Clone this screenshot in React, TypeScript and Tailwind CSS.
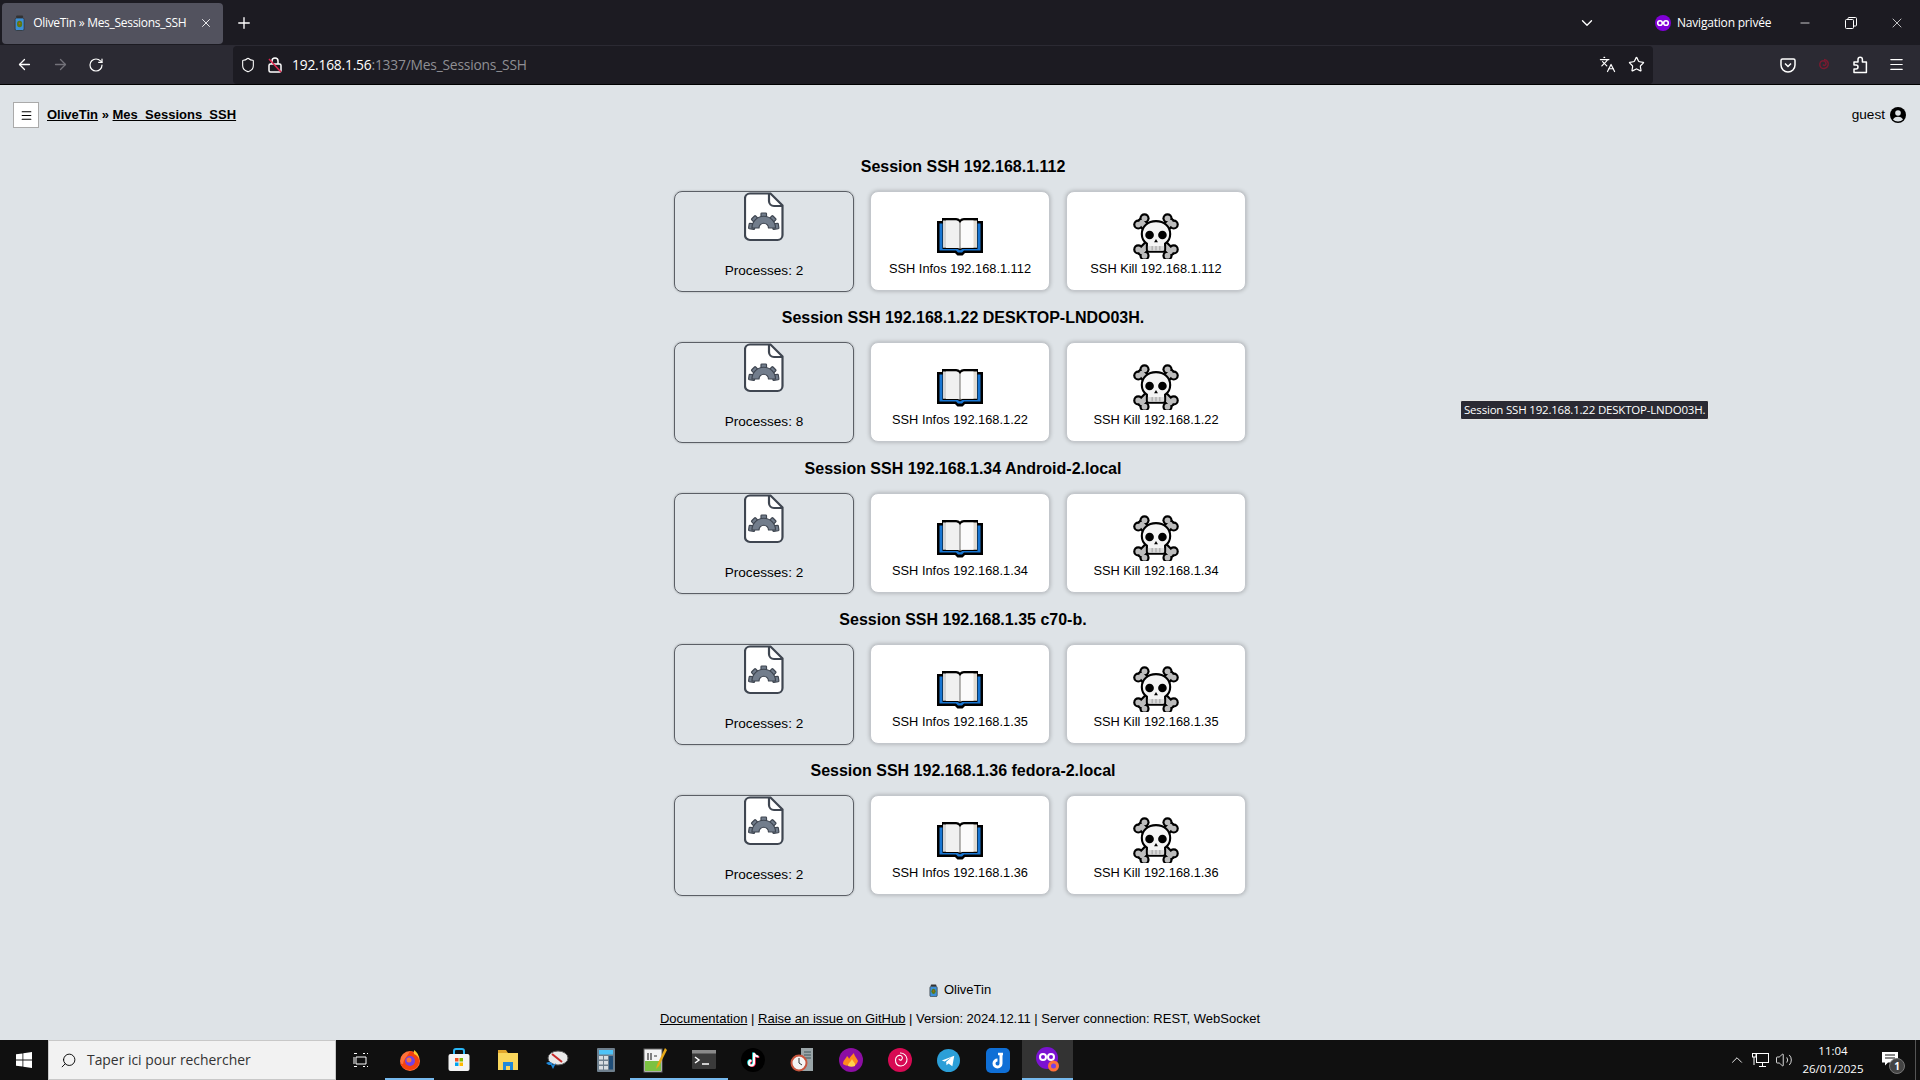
import { ArrowLeft, ArrowRight, ChevronDown, ChevronUp, Menu, Minus, Plus, RotateCw, Search, Shield, Star, X, Languages, Volume2 } from 'lucide-react';

const sessions = [
  { title: 'Session SSH 192.168.1.112', ip: '192.168.1.112', processes: 2 },
  { title: 'Session SSH 192.168.1.22 DESKTOP-LNDO03H.', ip: '192.168.1.22', processes: 8 },
  { title: 'Session SSH 192.168.1.34 Android-2.local', ip: '192.168.1.34', processes: 2 },
  { title: 'Session SSH 192.168.1.35 c70-b.', ip: '192.168.1.35', processes: 2 },
  { title: 'Session SSH 192.168.1.36 fedora-2.local', ip: '192.168.1.36', processes: 2 },
];

function OliveJar({ size = 14 }: { size?: number }) {
  return (
    <svg width={size * 0.7} height={size} viewBox="0 0 10 16">
      <rect x="1.5" y="0.5" width="7" height="2.5" rx="1" fill="#333" />
      <rect x="0.5" y="3" width="9" height="12.5" rx="1.5" fill="#3d8fd6" stroke="#333" strokeWidth="0.8" />
      <ellipse cx="5" cy="9" rx="2.6" ry="3.2" fill="#5c7a12" />
      <circle cx="5" cy="8.5" r="0.9" fill="#c2572b" />
    </svg>
  );
}

function FileGear() {
  return (
    <svg width="40" height="50" viewBox="0 0 40 50" fill="none">
      <path d="M6 1.500h20.500L38.500 13.500V43a5 5 0 0 1-5 5H6a5 5 0 0 1-5-5V6.500a5 5 0 0 1 5-5z" fill="#fff" stroke="#3f4651" strokeWidth="2.200" />
      <path d="M25 1.500V9a5 5 0 0 0 5 5h8.500" stroke="#3f4651" strokeWidth="2.200" />
      {/* half gear: teeth, then ring */}
      <g fill="#727d8c" stroke="#3f4651" strokeWidth="1.200" strokeLinejoin="round">
        <rect x="17" y="21" width="5.500" height="6" rx="0.800" />
        <rect x="17" y="21" width="5.500" height="6" rx="0.800" transform="rotate(-45 19.750 36)" />
        <rect x="17" y="21" width="5.500" height="6" rx="0.800" transform="rotate(45 19.750 36)" />
        <rect x="17" y="21" width="5.500" height="6" rx="0.800" transform="rotate(-82 19.750 36)" />
        <rect x="17" y="21" width="5.500" height="6" rx="0.800" transform="rotate(82 19.750 36)" />
      </g>
      <path d="M8 36a11.750 11.750 0 0 1 23.500 0h-7a4.750 4.750 0 0 0-9.500 0z" fill="#727d8c" stroke="#3f4651" strokeWidth="1.200" strokeLinejoin="round" />
    </svg>
  );
}

function BookIcon() {
  return (
    <svg width="46" height="38" viewBox="0 0 46 38" className="mt-[4px]">
      <path d="M0 3h5V0h14c2 0 3.200.8 4 1.800.8-1 2-1.800 4-1.800h14v3h5v32H28l-2.500 2.500h-5L18 35H0z" fill="#000" />
      <path d="M2.500 5.500h3V31h14c1.200 0 2.500.5 3.500 1.500 1-1 2.300-1.500 3.500-1.500h14V5.500h3v27H27l-2 2h-4l-2-2H2.500z" fill="#1976d2" />
      <path d="M6 2.500h13c1.800 0 3 1 3.500 2.500v26c-.8-.8-1.800-1.200-3-1.200H6z" fill="#d4d4d4" />
      <path d="M40 2.500H27c-1.800 0-3 1-3.500 2.500v26c.8-.8 1.800-1.200 3-1.200H40z" fill="#e2dcd2" />
      <path d="M9 2.500h10c1.800 0 3 1 3.500 2.500v25H9z" fill="#f0f0f0" />
      <path d="M23.500 5c.5-1.500 1.700-2.500 3.500-2.500h9.500v27.300h-13z" fill="#fbfbfb" />
    </svg>
  );
}

function Bones({ color, line, knob }: { color: string; line: number; knob: number }) {
  return (
    <g stroke={color} fill={color} strokeWidth={line} strokeLinecap="round">
      <path d="M9 10l30 30M39 10L9 40" />
      <circle cx="5.500" cy="12" r={knob} stroke="none" />
      <circle cx="12" cy="5.500" r={knob} stroke="none" />
      <circle cx="42.500" cy="12" r={knob} stroke="none" />
      <circle cx="36" cy="5.500" r={knob} stroke="none" />
      <circle cx="5.500" cy="38" r={knob} stroke="none" />
      <circle cx="12" cy="44.500" r={knob} stroke="none" />
      <circle cx="42.500" cy="38" r={knob} stroke="none" />
      <circle cx="36" cy="44.500" r={knob} stroke="none" />
    </g>
  );
}

function SkullIcon() {
  return (
    <svg width="46" height="46" viewBox="0 0 48 48" className="mt-[1px]">
      <Bones color="#000" line={10} knob={5.300} />
      <Bones color="#bdbdbd" line={5.500} knob={3} />
      <path d="M24 8.500c8.500 0 14.800 5.500 14.800 13.500 0 4.500-2 8-5.300 10v6c0 1.500-1 2.500-2.500 2.500H17c-1.500 0-2.500-1-2.500-2.500v-6c-3.300-2-5.300-5.500-5.300-10 0-8 6.300-13.500 14.800-13.500z" fill="#f4f4f4" stroke="#000" strokeWidth="2.200" />
      <circle cx="17.300" cy="23" r="4.500" fill="#000" />
      <circle cx="30.700" cy="23" r="4.500" fill="#000" />
      <path d="M24 27l2 3.500h-4z" fill="#000" />
      <path d="M15.500 34.500h17V39H15.500z" fill="#d9d9d9" />
      <path d="M20 34.500V39M24 34.500V39M28 34.500V39" stroke="#a8a8a8" strokeWidth="1.200" />
    </svg>
  );
}

function ActionCard({ icon, label }: { icon: React.ReactNode; label: string }) {
  return (
    <button className="w-[180px] h-[100px] rounded-lg bg-white border border-[#c3c7cc] shadow-[0_0_4px_rgba(0,0,0,0.25)] flex flex-col items-center justify-end pb-[14px] text-[12.8px] leading-[15px] text-black">
      <div className="h-[48px] flex items-center justify-center mb-[2px]">{icon}</div>
      <span>{label}</span>
    </button>
  );
}

function SessionRow({ title, ip, processes }: { title: string; ip: string; processes: number }) {
  return (
    <div className="flex flex-col items-center h-[151px]">
      <h3 className="h-[18px] mb-[15px] ml-[6px] text-[16px] leading-[18px] font-bold text-black text-center">{title}</h3>
      <div className="flex gap-[16px]">
        <div className="w-[180px] h-[101px] rounded-lg border border-[#5b5f66] shadow-[0_0_2px_rgba(0,0,0,0.3)] flex flex-col items-center pb-[12px] justify-between text-[13.6px] leading-[16px] text-black">
          <FileGear />
          <span>Processes: {processes}</span>
        </div>
        <ActionCard icon={<BookIcon />} label={`SSH Infos ${ip}`} />
        <ActionCard icon={<SkullIcon />} label={`SSH Kill ${ip}`} />
      </div>
    </div>
  );
}

function BrowserChrome() {
  return (
    <div className="shrink-0 text-white font-['Open_Sans',sans-serif]">
      {/* Tab strip */}
      <div className="h-[45px] bg-[#1c1b22] flex items-center pl-[2px]">
        <div className="w-[221px] h-[41px] mt-[1px] rounded-[4px] bg-[#52525e] flex items-center pl-[12px] pr-[10px] text-[12px] tracking-[-0.3px]">
          <OliveJar size={16} />
          <span className="ml-[8px] flex-1 whitespace-nowrap">OliveTin » Mes_Sessions_SSH</span>
          <X size={14} strokeWidth={1.5} />
        </div>
        <Plus size={18} className="ml-[12px]" strokeWidth={1.8} />
        <div className="flex-1" />
        <ChevronDown size={18} strokeWidth={1.8} className="mr-[59px]" />
        <svg width="16" height="16" viewBox="0 0 16 16" className="mr-[6px]">
          <circle cx="8" cy="8" r="8" fill="#8000d7" />
          <circle cx="5" cy="8" r="2.300" fill="none" stroke="#fff" strokeWidth="1.600" />
          <circle cx="11" cy="8" r="2.300" fill="none" stroke="#fff" strokeWidth="1.600" />
        </svg>
        <span className="text-[12px] tracking-[-0.2px] w-[100px] whitespace-nowrap">Navigation privée</span>
        <div className="w-[46px] flex justify-center ml-[5px]"><Minus size={14} strokeWidth={1.3} /></div>
        <div className="w-[46px] flex justify-center">
          <svg width="12" height="12" viewBox="0 0 12 12" fill="none" stroke="#fff"><rect x="0.500" y="2.500" width="8" height="9" rx="1" /><path d="M3 2.500V1.500a1 1 0 0 1 1-1h6.500a1 1 0 0 1 1 1V8a1 1 0 0 1-1 1H9" /></svg>
        </div>
        <div className="w-[46px] flex justify-center"><X size={16} strokeWidth={1.1} /></div>
      </div>
      {/* Toolbar */}
      <div className="h-[39px] bg-[#2b2a33] flex items-center pl-[16px]">
        <ArrowLeft size={17} strokeWidth={1.8} />
        <ArrowRight size={17} strokeWidth={1.8} className="ml-[19px] text-[#73727a]" />
        <RotateCw size={16} strokeWidth={1.8} className="ml-[19px]" />
        <div className="w-[1420px] shrink-0 ml-[129px] h-[38px] rounded-[4px] bg-[#1c1b22] flex items-center pl-[6px] pr-[8px] text-[13.8px]">
          <Shield size={16} strokeWidth={1.6} className="ml-[1px]" />
          <div className="relative ml-[12px] w-[14px] h-[16px] flex items-center justify-center">
            <svg width="14" height="16" viewBox="0 0 14 16" fill="none"><rect x="1" y="7" width="12" height="8" rx="1.500" stroke="#fff" strokeWidth="1.500" /><path d="M4 7V4a3 3 0 0 1 6 0v3" stroke="#fff" strokeWidth="1.500" /><path d="M1 2l12 13" stroke="#e22850" strokeWidth="1.500" /></svg>
          </div>
          <span className="ml-[10px] mt-[2px] tracking-[-0.2px] whitespace-nowrap">192.168.1.56<span className="text-[#8f8f94]">:1337/Mes_Sessions_SSH</span></span>
          <div className="flex-1" />
          <Languages size={17} strokeWidth={1.7} />
          <Star size={17} strokeWidth={1.7} className="ml-[12px]" />
        </div>
        <div className="flex-1 flex items-center justify-end pr-[6px]">
          <div className="w-[36px] flex justify-center">
            <svg width="16" height="16" viewBox="0 0 16 16" fill="none" stroke="#fff" strokeWidth="1.500"><path d="M2.500 2h11a1.500 1.500 0 0 1 1.500 1.500V8a7 7 0 0 1-14 0V3.500A1.500 1.500 0 0 1 2.500 2z" /><path d="M5 6.500l3 3 3-3" /></svg>
          </div>
          <div className="w-[36px] flex justify-center">
            <svg width="14" height="16" viewBox="0 0 14 16" fill="none" stroke="#7a1a30" strokeWidth="1.500"><path d="M7 2.500a4.500 4.500 0 1 1-3 8c-2-2-1.500-5.500 1-6.500 2-.5 4 .5 4 2.500S7 9 6 7.500" /></svg>
          </div>
          <div className="w-[36px] flex justify-center">
            <svg width="18" height="18" viewBox="0 0 18 18" fill="none" stroke="#fff" strokeWidth="1.500" strokeLinejoin="round"><path d="M3 6h4V3.500a2.200 2.200 0 0 1 4.400 0V6h4v10.500H3V13h2a2 2 0 0 0 0-4H3z" /></svg>
          </div>
          <div className="w-[36px] flex justify-center"><Menu size={17} strokeWidth={1.7} /></div>
        </div>
      </div>
      <div className="h-[1px] bg-black" />
    </div>
  );
}

function Taskbar() {
  const underline = 'absolute bottom-0 left-0 right-0 h-[2px] bg-[#76b9ed]';
  return (
    <div className="shrink-0 h-[40px] bg-[#101010] flex items-stretch text-white font-['Open_Sans',sans-serif]">
      <div className="w-[48px] flex items-center justify-center">
        <svg width="16" height="16" viewBox="0 0 16 16" fill="#fff"><path d="M0 2.300l6.500-.9v6.200H0zM7.300 1.300L16 0v7.600H7.300zM0 8.400h6.500v6.200L0 13.700zM7.300 8.400H16V16l-8.700-1.300z" /></svg>
      </div>
      <div className="w-[288px] bg-[#f2f2f2] border border-[#c8c8c8] flex items-center pl-[11px] text-[13.9px] text-[#333] whitespace-nowrap">
        <Search size={17} strokeWidth={1.3} className="text-black -scale-x-100" />
        <span className="ml-[10px]">Taper ici pour rechercher</span>
      </div>
      {/* Pinned apps */}
      <div className="flex items-stretch">
        <div className="w-[49px] flex items-center justify-center">
          <svg width="16" height="16" viewBox="0 0 16 16" fill="none" stroke="#fff" strokeWidth="1"><path d="M1 1.500h3M10 1.500h2M14 1.500h1M3 5h10v7H3zM1 5v7M15 5v0M1 14.500h3M10 14.500h2M14 14.500h1" /></svg>
        </div>
        <div className="w-[49px] relative flex items-center justify-center">
          <svg width="22" height="22" viewBox="0 0 22 22"><circle cx="11" cy="12" r="10" fill="#ff7139" /><path d="M11 2c4 1 8 4 9 9 1 6-4 10-9 10s-9-3-10-8c1 2 2 2 3 2C5 9 9 7 11 2z" fill="#f5420f" /><path d="M15 1c3 2 5 5 5 9-1-3-3-4-5-5z" fill="#ffca2c" /><circle cx="11" cy="12" r="5" fill="#7542e5" /><circle cx="10" cy="11" r="2.500" fill="#ff7139" /></svg>
          <div className={underline} />
        </div>
        <div className="w-[49px] flex items-center justify-center">
          <svg width="22" height="24" viewBox="0 0 22 24"><path d="M6 7V3a2 2 0 0 1 2-2h6a2 2 0 0 1 2 2v4" fill="none" stroke="#29b6f6" strokeWidth="2" /><rect x="0.500" y="6" width="21" height="17" rx="2" fill="#f4f4f4" /><rect x="7" y="10" width="3.500" height="3.500" fill="#f25022" /><rect x="11.500" y="10" width="3.500" height="3.500" fill="#7fba00" /><rect x="7" y="14.500" width="3.500" height="3.500" fill="#00a4ef" /><rect x="11.500" y="14.500" width="3.500" height="3.500" fill="#ffb900" /></svg>
        </div>
        <div className="w-[49px] flex items-center justify-center">
          <svg width="22" height="20" viewBox="0 0 22 20"><path d="M1 0h8l2 3h10v17H1z" fill="#e0a52b" /><path d="M1 3h20v17H1z" fill="#f9d65c" /><path d="M6 12h10v8h-3v-4H9v4H6z" fill="#1e88d9" /></svg>
        </div>
        <div className="w-[49px] flex items-center justify-center">
          <svg width="24" height="22" viewBox="0 0 24 22"><ellipse cx="13" cy="9" rx="10" ry="7" fill="#e9e9e9" stroke="#555" /><path d="M7 5l10 8" stroke="#c62828" strokeWidth="2" /><path d="M5 14l3 6 3-6-3 2z" fill="#1e88d9" /><path d="M1 14c3-2 5-1 7 1-3 2-5 1-7-1z" fill="#1e88d9" /></svg>
        </div>
        <div className="w-[49px] flex items-center justify-center">
          <svg width="18" height="24" viewBox="0 0 18 24"><rect width="18" height="24" rx="1" fill="#6e7f8d" /><rect x="2" y="2" width="14" height="4.500" fill="#4fc3f7" /><g fill="#d7dde2"><rect x="2" y="8" width="4" height="3.500" /><rect x="7" y="8" width="4" height="3.500" /><rect x="2" y="13" width="4" height="3.500" /><rect x="7" y="13" width="4" height="3.500" /><rect x="2" y="18" width="4" height="3.500" /><rect x="7" y="18" width="4" height="3.500" /></g><rect x="12" y="8" width="4" height="13.500" fill="#1f4e79" /></svg>
        </div>
        <div className="w-[49px] relative flex items-center justify-center">
          <svg width="24" height="26" viewBox="0 0 24 26"><rect x="1" y="2" width="18" height="23" fill="#f3f3f3" stroke="#666" /><path d="M2 14h16v10H2z" fill="#7cc142" /><path d="M5 6v7M8 6v7M11 9h3" stroke="#333" strokeWidth="1.200" /><path d="M22 1l-8 17-1 4 3-3 8-16z" fill="#e8a917" /></svg>
          <div className={underline} />
        </div>
        <div className="w-[49px] relative flex items-center justify-center">
          <svg width="24" height="20" viewBox="0 0 24 20"><rect width="24" height="19" rx="1" fill="#3a3a3a" /><rect width="24" height="3.500" fill="#8a8a8a" /><path d="M3 7l4 3-4 3" fill="none" stroke="#fff" strokeWidth="1.500" /><path d="M10 14h7" stroke="#fff" strokeWidth="1.500" /></svg>
          <div className={underline} />
        </div>
        <div className="w-[49px] flex items-center justify-center">
          <svg width="24" height="24" viewBox="0 0 24 24"><circle cx="12" cy="12" r="12" fill="#000" /><path d="M13 5v10a2.500 2.500 0 1 1-2.500-2.500M13 5c.5 2.500 2.500 3.500 4.500 3.500" fill="none" stroke="#25f4ee" strokeWidth="2" transform="translate(-0.800 -0.600)" /><path d="M13 5v10a2.500 2.500 0 1 1-2.500-2.500M13 5c.5 2.500 2.500 3.500 4.500 3.500" fill="none" stroke="#fe2c55" strokeWidth="2" transform="translate(0.800 0.600)" /><path d="M13 5v10a2.500 2.500 0 1 1-2.500-2.500M13 5c.5 2.500 2.500 3.500 4.500 3.500" fill="none" stroke="#fff" strokeWidth="2" /></svg>
        </div>
        <div className="w-[49px] flex items-center justify-center">
          <svg width="24" height="26" viewBox="0 0 24 26"><rect x="11" y="1" width="12" height="23" fill="#9aa5a8" /><path d="M14 5h7M14 8h7M14 11h7" stroke="#40555b" /><circle cx="9" cy="16" r="7.500" fill="#f4f4f4" stroke="#c8553d" strokeWidth="2" /><path d="M9 11v5l3 2" stroke="#333" fill="none" /></svg>
        </div>
        <div className="w-[49px] flex items-center justify-center">
          <svg width="24" height="24" viewBox="0 0 24 24"><circle cx="12" cy="12" r="12" fill="#8c0ea3" /><path d="M4 16c0-4 3-5 4-8 1 1 2 2 2 3 1-2 3-4 5-6 0 3 3 5 4 8-1 3-3 5-7 5s-7-1-8-2z" fill="#ff8a1e" /><path d="M9 18c0-3 3-4 4-7 1 3 4 4 3 7-2 1-5 1-7 0z" fill="#ffd34d" /></svg>
        </div>
        <div className="w-[49px] flex items-center justify-center">
          <svg width="24" height="24" viewBox="0 0 24 24"><circle cx="12" cy="12" r="12" fill="#d70a53" /><path d="M12 5a6.500 6.500 0 0 1 1 13c-3 0-5.500-2-5.500-6 0-3 2.500-5 5-4.500 2 .5 2.500 3 1 4.200-1 .8-2.500.2-2.500-1" fill="none" stroke="#fff" strokeWidth="1.100" /></svg>
        </div>
        <div className="w-[49px] flex items-center justify-center">
          <svg width="23" height="23" viewBox="0 0 24 24"><circle cx="12" cy="12" r="12" fill="#2b9fd8" /><path d="M5 12l13-5-2 11-4-3-2 2-.5-3.500 5.500-5L8 13z" fill="#fff" /></svg>
        </div>
        <div className="w-[49px] flex items-center justify-center">
          <svg width="24" height="25" viewBox="0 0 24 25"><rect width="24" height="25" rx="5" fill="#0f6fd6" /><path d="M15 5v10.500a3.500 3.500 0 1 1-3.500-3.500" fill="none" stroke="#fff" strokeWidth="3" /><path d="M12 6h5" stroke="#fff" strokeWidth="2.500" /></svg>
        </div>
        <div className="w-[51px] relative bg-[#333] flex items-center justify-center">
          <svg width="24" height="26" viewBox="0 0 24 26"><circle cx="11" cy="11" r="11" fill="#7b12d1" /><circle cx="7" cy="10" r="3" fill="none" stroke="#fff" strokeWidth="2" /><circle cx="15" cy="10" r="3" fill="none" stroke="#fff" strokeWidth="2" /><circle cx="17.500" cy="19" r="5.500" fill="#ff7139" /><circle cx="17.500" cy="19" r="2.500" fill="#7542e5" /></svg>
          <div className={underline} />
        </div>
      </div>
      <div className="flex-1" />
      {/* System tray */}
      <div className="flex items-center">
        <ChevronUp size={18} strokeWidth={1.2} />
        <div className="ml-[6px]">
          <svg width="17" height="14" viewBox="0 0 17 14" fill="none" stroke="#fff"><rect x="4.500" y="0.500" width="12" height="9" /><path d="M10.500 10v3M7 13.500h7" /><rect x="0.500" y="0.500" width="3.500" height="3.500" fill="#101010" /><path d="M2 4v8" /></svg>
        </div>
        <Volume2 size={18} strokeWidth={1.1} className="ml-[6px]" />
        <div className="ml-[7px] w-[66px] flex flex-col items-center text-[11.5px] leading-[18px]">
          <span>11:04</span>
          <span className="whitespace-nowrap">26/01/2025</span>
        </div>
        <div className="relative w-[44px] ml-[5px] h-full flex items-center justify-center">
          <svg width="16" height="14" viewBox="0 0 16 14" className="-mt-[3px] -ml-[6px]"><path d="M0 0h16v10.500H6L3 13.500v-3H0z" fill="#fff" /><path d="M3 3h10M3 6h10" stroke="#101010" /></svg>
          <span className="absolute left-[18px] top-[18px] w-[16px] h-[16px] rounded-full bg-[#444] border border-[#777] text-[10px] leading-[14px] font-bold text-center">1</span>
        </div>
        <div className="w-[1px] h-full bg-[#555]" />
        <div className="w-[4px]" />
      </div>
    </div>
  );
}

export default function App() {
  return (
    <div className="relative h-screen overflow-hidden flex flex-col bg-[#dee3e7] font-['Liberation_Sans',Arial,sans-serif]">
      <BrowserChrome />
      <div className="flex-1 min-h-0 flex flex-col">
        {/* Header */}
        <div className="h-[48px] flex items-center justify-between pl-[13px] pr-[14px] mt-[6px]">
          <div className="flex items-center">
            <button className="w-[26px] h-[26px] bg-white border border-[#aaa] flex items-center justify-center">
              <Menu size={13} strokeWidth={2} className="text-black" />
            </button>
            <div className="ml-[8px] text-[13px] font-bold text-black">
              <a className="underline">OliveTin</a> » <a className="underline">Mes_Sessions_SSH</a>
            </div>
          </div>
          <div className="flex items-center text-[13.6px] text-black">
            guest
            <svg width="16" height="16" viewBox="0 0 16 16" className="ml-[5px]"><circle cx="8" cy="8" r="8" fill="#000" /><circle cx="8" cy="6" r="2.800" fill="#dee3e7" /><path d="M3 12.500c1-2 3-2.700 5-2.700s4 .7 5 2.700c-1.200 1.300-3 2-5 2s-3.800-.7-5-2z" fill="#dee3e7" /></svg>
          </div>
        </div>
        {/* Sessions */}
        <div className="mt-[19px] flex flex-col items-center">
          {sessions.map((s) => (
            <SessionRow key={s.ip} {...s} />
          ))}
        </div>
        {/* Footer */}
        <div className="mt-auto pb-[15px] flex flex-col items-center text-[13px] text-black">
          <div className="flex items-center h-[16px]">
            <OliveJar size={13} />
            <span className="ml-[6px]">OliveTin</span>
          </div>
          <div className="mt-[11px] h-[16px] whitespace-nowrap">
            <a className="underline">Documentation</a> | <a className="underline">Raise an issue on GitHub</a> | Version: 2024.12.11 | Server connection: REST, WebSocket
          </div>
        </div>
      </div>
      <Taskbar />
      {/* Link tooltip */}
      <div className="absolute left-[1460px] top-[400px] h-[20px] px-[3px] rounded-[2px] bg-[#2b2a33] border border-[#e5e5e5] text-white text-[11.5px] leading-[18px] tracking-[-0.2px] whitespace-nowrap font-['Open_Sans',sans-serif]">
        Session SSH 192.168.1.22 DESKTOP-LNDO03H.
      </div>
    </div>
  );
}
